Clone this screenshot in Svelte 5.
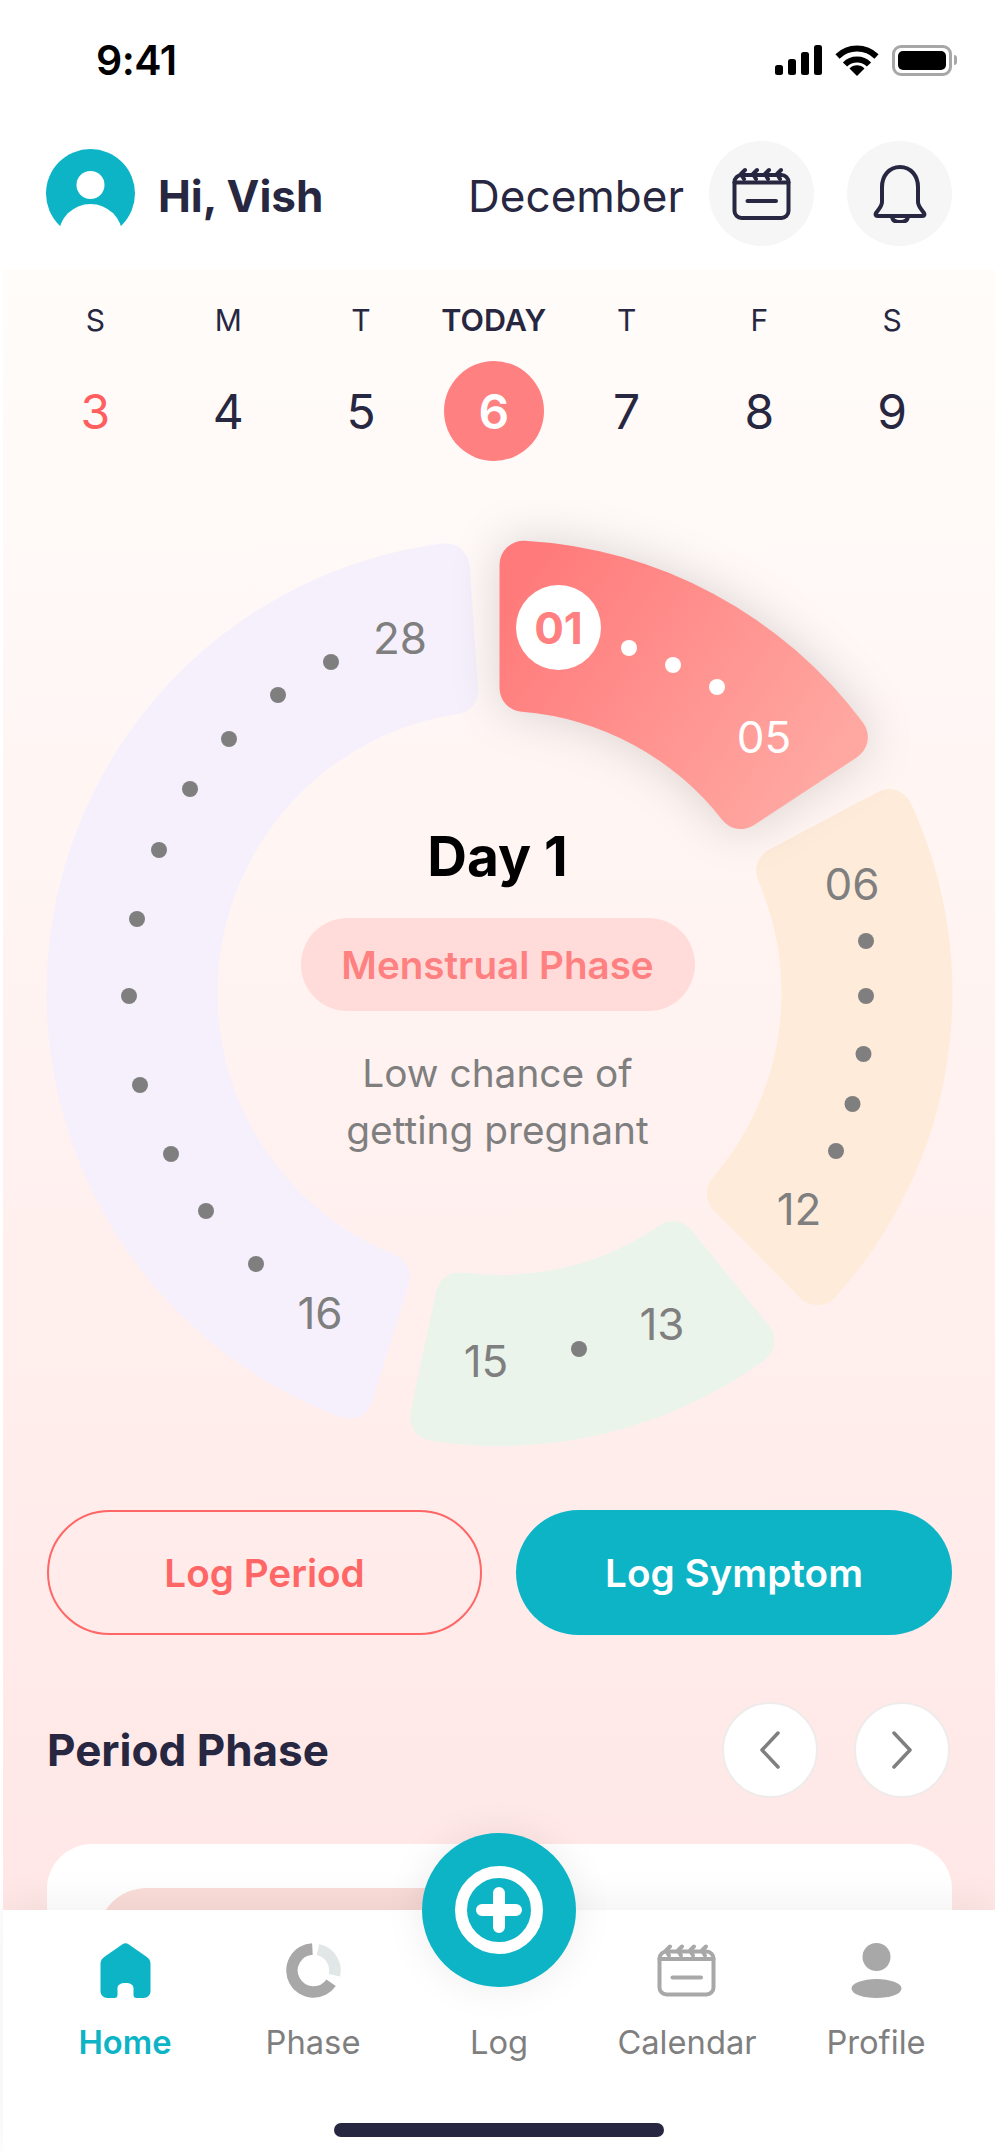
<script>
  const CX = 499.5, CY = 993, R0 = 282, R1 = 453, C = 24;
  const pt = (r, a) => {
    const t = (a * Math.PI) / 180;
    return `${(CX + r * Math.sin(t)).toFixed(2)} ${(CY - r * Math.cos(t)).toFixed(2)}`;
  };
  function sector(a0, a1, c = C) {
    const dO = (Math.asin(c / (R1 - c)) * 180) / Math.PI;
    const dI = (Math.asin(c / (R0 + c)) * 180) / Math.PI;
    const lO = Math.sqrt((R1 - c) ** 2 - c ** 2);
    const lI = Math.sqrt((R0 + c) ** 2 - c ** 2);
    const large = a1 - a0 > 180 ? 1 : 0;
    return [
      `M${pt(lO, a0)}`,
      `A${c} ${c} 0 0 1 ${pt(R1, a0 + dO)}`,
      `A${R1} ${R1} 0 ${large} 1 ${pt(R1, a1 - dO)}`,
      `A${c} ${c} 0 0 1 ${pt(lO, a1)}`,
      `L${pt(lI, a1)}`,
      `A${c} ${c} 0 0 1 ${pt(R0, a1 - dI)}`,
      `A${R0} ${R0} 0 ${large} 0 ${pt(R0, a0 + dI)}`,
      `A${c} ${c} 0 0 1 ${pt(lI, a0)}`,
      'Z'
    ].join(' ');
  }

  const days = [
    { l: 'S', n: 3, cls: 'sun' },
    { l: 'M', n: 4 },
    { l: 'T', n: 5 },
    { l: 'TODAY', n: 6, cls: 'today' },
    { l: 'T', n: 7 },
    { l: 'F', n: 8 },
    { l: 'S', n: 9 }
  ];
  const greyDots = [
    [331, 662], [278, 695], [229, 739], [190, 789], [159, 850], [137, 919], [129, 996],
    [140, 1085], [171, 1154], [206, 1211], [256, 1264],
    [866, 941], [866, 996], [863.5, 1054], [852.5, 1104], [836, 1151],
    [579, 1349]
  ];
  const whiteDots = [[629, 648], [673, 665], [717, 687]];
  const labels = [
    ['28', 400, 638], ['06', 852, 884], ['12', 799, 1209],
    ['13', 662, 1324], ['15', 486, 1361], ['16', 320, 1313]
  ];
</script>

{#snippet calendarIcon(cls)}
  <svg class={cls} viewBox="0 0 60 54" fill="none" stroke="currentColor" stroke-width="4" stroke-linecap="round" stroke-linejoin="round">
    <rect x="2.5" y="8" width="54" height="43" rx="7" />
    <path d="M2.5 15.5H56.5" />
    <path d="M13 3 9 7l3 5M25 3l-4 4 3 5M37 3l-4 4 3 5M49 3l-4 4 3 5" />
    <path d="M15.5 34H44" />
  </svg>
{/snippet}

<div class="phone">
  <div class="status">
    <span class="time">9:41</span>
    <div class="status-icons">
      <svg class="signal" viewBox="0 0 47 30" fill="#000">
        <rect x="0" y="20" width="8" height="10" rx="2.5" />
        <rect x="13" y="14" width="8" height="16" rx="2.5" />
        <rect x="26" y="7" width="8" height="23" rx="2.5" />
        <rect x="39" y="0" width="8" height="30" rx="2.5" />
      </svg>
      <svg class="wifi" viewBox="0 0 44 31" fill="none" stroke="#000" stroke-width="6">
        <path d="M2.5 11.5A28 28 0 0 1 41.5 11.5" />
        <path d="M10 19.5A17 17 0 0 1 34 19.5" />
        <path d="M22 31 14.5 23.5A10.5 10.5 0 0 1 29.5 23.5Z" fill="#000" stroke="none" />
      </svg>
      <div class="battery"><span class="charge"></span></div>
      <span class="tip"></span>
    </div>
  </div>

  <header class="header">
    <svg class="avatar" viewBox="0 0 89 89">
      <circle cx="44.5" cy="44.5" r="44.5" fill="#0DB4C6" />
      <circle cx="44.5" cy="36" r="14" fill="#fff" />
      <circle cx="44.5" cy="87" r="32" fill="#fff" />
    </svg>
    <span class="hi">Hi, Vish</span>
    <span class="month">December</span>
    <div class="icon-btn">{@render calendarIcon('cal-dark')}</div>
    <div class="icon-btn">
      <svg class="bell" viewBox="0 0 54 58" fill="none" stroke="#272741" stroke-width="4" stroke-linecap="round" stroke-linejoin="round">
        <path d="M9 22C9 11 16 2 27 2s18 9 18 20v15c0 4 3 7 6 11 1 2 0 3-2 3H5c-2 0-3-1-2-3 3-4 6-7 6-11Z" />
        <path d="M19 51c0 4 3 6 8 6s8-2 8-6" />
      </svg>
    </div>
  </header>

  <main class="main">
    <div class="week">
      {#each days as d}
        <div class="day {d.cls ?? ''}">
          <span class="label">{d.l}</span>
          <span class="num">{d.n}</span>
        </div>
      {/each}
    </div>

    <div class="ring">
      <svg viewBox="0 500 995 960" width="995" height="960">
        <defs>
          <linearGradient id="red" gradientUnits="userSpaceOnUse" x1="510" y1="590" x2="810" y2="800">
            <stop offset="0" stop-color="#FF7A7A" />
            <stop offset="1" stop-color="#FFA8A2" />
          </linearGradient>
        </defs>
        <path d={sector(197.3, 356)} fill="#F6F0FD" />
        <path d={sector(62, 135.4)} fill="#FFEBDA" />
        <path d={sector(141, 192)} fill="#EBF4EB" />
        <path class="red" d={sector(0, 56.6)} fill="url(#red)" />
        {#each greyDots as [x, y]}
          <circle cx={x} cy={y} r="8" fill="#7F7F7F" />
        {/each}
        {#each whiteDots as [x, y]}
          <circle cx={x} cy={y} r="8" fill="#fff" />
        {/each}
        <circle cx="558.5" cy="627.5" r="42.5" fill="#fff" />
        <text class="first" x="558.5" y="644" text-anchor="middle">01</text>
        <text class="mark" x="764" y="753" text-anchor="middle" fill="#fff">05</text>
        {#each labels as [t, x, y]}
          <text class="mark" {x} y={y + 16} text-anchor="middle" fill="#7F7F7F">{t}</text>
        {/each}
      </svg>
      <div class="center">
        <div class="day-title">Day 1</div>
        <div class="pill">Menstrual Phase</div>
        <p class="chance">Low chance of<br />getting pregnant</p>
      </div>
    </div>

    <div class="actions">
      <button class="btn outline">Log Period</button>
      <button class="btn solid">Log Symptom</button>
    </div>

    <div class="section">
      <h2>Period Phase</h2>
      <div class="arrows">
        <div class="arrow">
          <svg viewBox="0 0 24 38" fill="none" stroke="#7F7F7F" stroke-width="3.5" stroke-linecap="round" stroke-linejoin="round"><path d="M20 2 4 19l16 17" /></svg>
        </div>
        <div class="arrow">
          <svg viewBox="0 0 24 38" fill="none" stroke="#7F7F7F" stroke-width="3.5" stroke-linecap="round" stroke-linejoin="round"><path d="M4 2l16 17L4 36" /></svg>
        </div>
      </div>
    </div>

    <div class="card"><div class="inner"></div></div>
  </main>

  <nav class="nav">
    <div class="nav-item active">
      <svg class="nav-icon home" viewBox="0 0 50 55" fill="#0DB4C6">
        <path d="M22 1.2c2-1.4 4-1.4 6 0l18 12.5c2.600 1.800 4 4 4 7V48c0 4-3 7-7 7h-7c-2 0-3-1-3-3V45c0-3-3-5-8-5s-8 2-8 5v7c0 2-1 3-3 3H7c-4 0-7-3-7-7V20.700c0-3 1.400-5.200 4-7Z" />
      </svg>
      <span>Home</span>
    </div>
    <div class="nav-item">
      <svg class="nav-icon" viewBox="0 0 55 55" fill="none" stroke-width="11.5">
        <path d="M26.400 6A21.500 21.500 0 1 0 45.100 39.800" stroke="#A8A8A8" />
        <path d="M32 6.500A21.500 21.500 0 0 1 48.400 32.300" stroke="#E1E6E6" />
      </svg>
      <span>Phase</span>
    </div>
    <div class="nav-item">
      <span class="nav-spacer"></span>
      <span>Log</span>
    </div>
    <div class="nav-item">
      {@render calendarIcon('nav-icon cal-grey')}
      <span>Calendar</span>
    </div>
    <div class="nav-item">
      <svg class="nav-icon" viewBox="0 0 50 55" fill="#A8A8A8">
        <circle cx="25" cy="14" r="14" />
        <ellipse cx="25" cy="45.500" rx="25" ry="9.500" />
      </svg>
      <span>Profile</span>
    </div>
    <div class="indicator"></div>
  </nav>

  <div class="fab">
    <svg viewBox="0 0 100 100" fill="none" stroke="#fff" stroke-linecap="round">
      <circle cx="50" cy="50" r="38" stroke-width="12" />
      <path d="M50 33V67M33 50H67" stroke-width="12" />
    </svg>
  </div>
</div>

<style>
  :global(body) {
    margin: 0;
    background: #fff;
  }
  .phone {
    position: relative;
    width: 995px;
    height: 2153px;
    overflow: hidden;
    background: #fff;
    font-family: Inter, "Liberation Sans", sans-serif;
    color: #272741;
  }
  .status {
    height: 114px;
    display: flex;
    justify-content: space-between;
    align-items: center;
    padding: 6px 38px 0 96px;
    box-sizing: border-box;
  }
  .time {
    font-size: 41px;
    font-weight: 600;
    color: #000;
    letter-spacing: -0.5px;
  }
  .status-icons {
    display: flex;
    align-items: center;
  }
  .signal { width: 47px; height: 30px; margin-right: 13px; }
  .wifi { width: 44px; height: 31px; margin-right: 13px; }
  .battery {
    width: 60px;
    height: 31px;
    box-sizing: border-box;
    border: 3px solid #A7A7A7;
    border-radius: 9px;
    padding: 3px;
  }
  .charge {
    display: block;
    height: 100%;
    background: #000;
    border-radius: 5px;
  }
  .tip {
    width: 3px;
    height: 10px;
    margin-left: 2px;
    background: #A7A7A7;
    border-radius: 0 3px 3px 0;
  }
  .header {
    height: 156px;
    box-sizing: border-box;
    padding: 27px 43px 0 46px;
    display: flex;
    align-items: flex-start;
  }
  .avatar { width: 89px; height: 89px; margin-top: 8px; }
  .hi {
    margin: 30px 0 0 23px;
    font-size: 44px;
    font-weight: 700;
    line-height: 50px;
  }
  .month {
    margin: 30px 0 0 auto;
    font-size: 44px;
    line-height: 50px;
  }
  .icon-btn {
    width: 105px;
    height: 105px;
    border-radius: 50%;
    background: #F6F6F6;
    margin-left: 25px;
    display: flex;
    align-items: center;
    justify-content: center;
  }
  .icon-btn + .icon-btn { margin-left: 33px; }
  .cal-dark { width: 60px; height: 54px; color: #272741; }
  .bell { width: 54px; height: 58px; }
  .main {
    margin-left: 3px;
    height: 1883px;
    padding: 32px 0 0;
    box-sizing: border-box;
    background: linear-gradient(180deg, #FFFCFA 0%, #FFF3F1 40%, #FFE4E3 100%);
  }
  .week {
    display: grid;
    grid-template-columns: repeat(7, 132.8px);
    padding-left: 26px;
    margin-bottom: 39px;
  }
  .day {
    display: flex;
    flex-direction: column;
    align-items: center;
    gap: 23px;
  }
  .label {
    font-size: 30px;
    line-height: 36px;
    white-space: nowrap;
  }
  .today .label { font-weight: 600; font-size: 30.500px; }
  .num {
    width: 100px;
    height: 100px;
    display: flex;
    align-items: center;
    justify-content: center;
    font-size: 48px;
  }
  .sun .num { color: #FF5F5F; }
  .today .num {
    background: #FF8080;
    border-radius: 50%;
    color: #fff;
    font-weight: 600;
  }
  .ring {
    position: relative;
    width: 995px;
    height: 960px;
    margin-left: -3px;
  }
  .ring svg { display: block; }
  .red { filter: drop-shadow(0 0 24px rgba(0, 0, 0, 0.15)); }
  .mark { font-size: 44px; }
  .first {
    font-size: 44px;
    font-weight: 700;
    fill: #FF8080;
  }
  .center {
    position: absolute;
    left: 0;
    right: 0;
    top: 324px;
    display: flex;
    flex-direction: column;
    align-items: center;
  }
  .day-title {
    font-size: 55px;
    font-weight: 700;
    line-height: 64px;
    color: #000;
  }
  .pill {
    margin-top: 30px;
    width: 394px;
    height: 93px;
    border-radius: 47px;
    background: #FFDCDA;
    color: #FF8080;
    font-size: 38.600px;
    font-weight: 600;
    display: flex;
    align-items: center;
    justify-content: center;
  }
  .chance {
    margin: 33px 0 0;
    font-size: 38.800px;
    line-height: 57px;
    text-align: center;
    color: #7F7F7F;
  }
  .actions {
    margin: 50px 40px 0 44px;
    display: grid;
    grid-template-columns: 435px 436px;
    gap: 34px;
  }
  .btn {
    height: 125px;
    border-radius: 63px;
    font: 600 38.700px Inter, "Liberation Sans", sans-serif;
    padding: 0;
  }
  .outline {
    border: 2.500px solid #FF6666;
    background: transparent;
    color: #FF6666;
  }
  .solid {
    border: 0;
    background: #0DB4C6;
    color: #fff;
  }
  .section {
    margin: 67px 45px 0 44px;
    height: 95px;
    display: flex;
    align-items: center;
    justify-content: space-between;
  }
  h2 {
    margin: 0;
    font-size: 44px;
    font-weight: 700;
    color: #272741;
  }
  .arrows { display: flex; gap: 36px; }
  .arrow {
    width: 96px;
    height: 96px;
    box-sizing: border-box;
    border: 2px solid #EFEBEB;
    border-radius: 50%;
    background: #fff;
    display: flex;
    align-items: center;
    justify-content: center;
  }
  .arrow svg { width: 24px; height: 38px; }
  .card {
    margin: 47px 43px 0 44px;
    height: 300px;
    padding: 44px 0 0 50px;
    box-sizing: border-box;
    background: #fff;
    border-radius: 45px 45px 0 0;
  }
  .inner {
    height: 120px;
    width: 440px;
    border-radius: 50px 50px 0 0;
    background: #FADCD8;
  }
  .nav {
    position: absolute;
    left: 3px;
    right: 0;
    top: 1910px;
    height: 243px;
    background: #fff;
    box-shadow: 0 -6px 40px rgba(0, 0, 0, 0.06);
    font-size: 32.700px;
    color: #7F7F7F;
  }
  .nav-item {
    position: absolute;
    top: 33px;
    width: 200px;
    display: flex;
    flex-direction: column;
    align-items: center;
    gap: 24px;
  }
  .nav-item:nth-child(1) { left: 22px; }
  .nav-item:nth-child(2) { left: 210px; }
  .nav-item:nth-child(3) { left: 396px; }
  .nav-item:nth-child(4) { left: 584px; }
  .nav-item:nth-child(5) { left: 773px; }
  .nav-item span { line-height: 40px; }
  .nav-item.active { color: #0DB4C6; font-weight: 600; }
  .nav-icon { height: 55px; width: 55px; }
  :global(.cal-grey) { color: #A8A8A8; width: 60px !important; }
  .nav-spacer { height: 55px; }
  .indicator {
    position: absolute;
    left: 331px;
    top: 213px;
    width: 330px;
    height: 14px;
    border-radius: 7px;
    background: #272741;
  }
  .fab {
    position: absolute;
    left: 422px;
    top: 1833px;
    width: 154px;
    height: 154px;
    border-radius: 50%;
    background: #0DB4C6;
    box-shadow: 0 0 40px rgba(0, 0, 0, 0.08);
    display: flex;
    align-items: center;
    justify-content: center;
  }
  .fab svg { width: 100px; height: 100px; }
</style>
